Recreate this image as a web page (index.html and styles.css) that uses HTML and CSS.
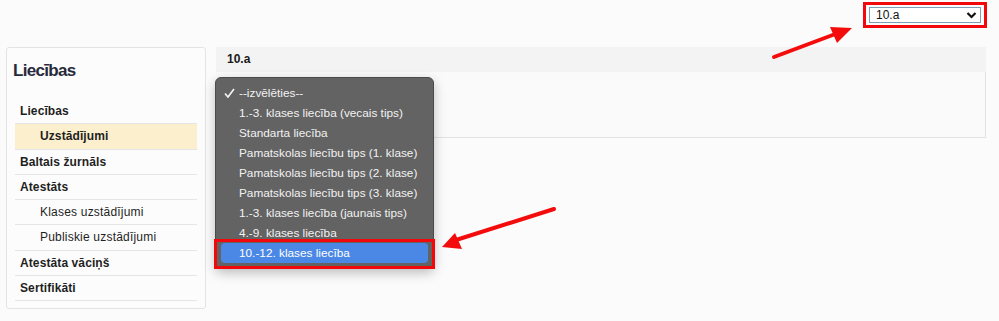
FILE: index.html
```html
<!DOCTYPE html>
<html lang="lv">
  <head>
    <meta charset="UTF-8" />
    <title>Liecības</title>
    <link rel="stylesheet" href="styles.css">
  </head>
  <body>
    <div class="topbar">
      <div class="mark">
        <div class="class-select">
          <span>10.a</span>
          <svg class="chevron" width="11" height="8" viewBox="0 0 11 8">
            <path d="M1.5 2 L5.5 6 L9.5 2" fill="none" stroke="#111" stroke-width="2.2" />
          </svg>
        </div>
      </div>
    </div>

    <div class="content">
      <aside class="sidebar">
        <h2 class="sidebar-title">Liecības</h2>
        <ul class="menu">
          <li class="menu-item">Liecības</li>
          <li class="menu-item sub active">Uzstādījumi</li>
          <li class="menu-item">Baltais žurnāls</li>
          <li class="menu-item">Atestāts</li>
          <li class="menu-item sub plain">Klases uzstādījumi</li>
          <li class="menu-item sub plain">Publiskie uzstādījumi</li>
          <li class="menu-item">Atestāta vāciņš</li>
          <li class="menu-item">Sertifikāti</li>
        </ul>
      </aside>

      <main class="panel">
        <div class="panel-head">10.a</div>
        <div class="panel-body"></div>
      </main>
    </div>

    <!-- open native-looking popup of the type select -->
    <ul class="popup">
      <li>
        <svg class="check" width="11" height="10" viewBox="0 0 11 10">
          <path d="M1 5.5 L4 9 L10 1" fill="none" stroke="#f2f2f2" stroke-width="1.7" />
        </svg>
        --izvēlēties--
      </li>
      <li>1.-3. klases liecība (vecais tips)</li>
      <li>Standarta liecība</li>
      <li>Pamatskolas liecību tips (1. klase)</li>
      <li>Pamatskolas liecību tips (2. klase)</li>
      <li>Pamatskolas liecību tips (3. klase)</li>
      <li>1.-3. klases liecība (jaunais tips)</li>
      <li>4.-9. klases liecība</li>
      <li class="selected">10.-12. klases liecība</li>
    </ul>
    <div class="popup-mark"></div>

    <!-- annotation arrows -->
    <svg class="arrows" width="999" height="321" viewBox="0 0 999 321">
      <line x1="774" y1="57" x2="838" y2="33" stroke="#f40c0c" stroke-width="4" stroke-linecap="round" />
      <polygon points="852,28 830,27 837,43" fill="#f40c0c" />
      <line x1="554" y1="209" x2="456" y2="240" stroke="#f40c0c" stroke-width="4" stroke-linecap="round" />
      <polygon points="442,247 455,233 462,249" fill="#f40c0c" />
    </svg>
  </body>
</html>
```

FILE: styles.css
```css
* {
  margin: 0;
  padding: 0;
  box-sizing: border-box;
}

body {
  font-family: "Liberation Sans", Arial, sans-serif;
  background: #fbfbfb;
  width: 999px;
  height: 321px;
  overflow: hidden;
  position: relative;
  color: #222;
}

.topbar {
  height: 47px;
  display: flex;
  justify-content: flex-end;
  align-items: flex-start;
  padding: 2px 12px 0 0;
}

.mark {
  border: 3px solid #f2080b;
  padding: 2px 3px;
}

.class-select {
  width: 112px;
  height: 16px;
  background: #fff;
  border: 1px solid #7f9db5;
  display: flex;
  align-items: center;
  justify-content: space-between;
  padding: 0 3px 0 6px;
  font-size: 12px;
  color: #111;
}

.content {
  display: flex;
  gap: 10px;
  padding: 0 13px 0 6px;
}

.sidebar {
  width: 200px;
  height: 262px;
  border: 1px solid #e4e4e4;
  border-radius: 3px;
  background: #fcfcfc;
  padding: 11px 8px 0 8px;
}

.sidebar-title {
  font-size: 17px;
  font-weight: 700;
  letter-spacing: -0.7px;
  color: #272a3b;
  line-height: 24px;
  margin: 0 0 16px -2px;
}

.menu {
  list-style: none;
}

.menu-item {
  height: 25.3px;
  line-height: 24px;
  border-bottom: 1px solid #e5e5e5;
  padding-left: 5px;
  font-size: 12px;
  font-weight: 700;
  letter-spacing: 0.1px;
  color: #1f1f1f;
}

.menu-item.sub {
  padding-left: 25px;
}

.menu-item.plain {
  font-weight: 400;
  letter-spacing: 0.2px;
}

.menu-item.active {
  background: #fcefcd;
}

.panel {
  flex: 1;
}

.panel-head {
  height: 25px;
  line-height: 25px;
  background: #f3f3f3;
  padding-left: 11px;
  font-size: 12px;
  font-weight: 700;
  color: #1a1a1a;
}

.panel-body {
  height: 66px;
  background: #fafafa;
  border-right: 1px solid #e2e2e2;
  border-bottom: 1px solid #e2e2e2;
}

.popup {
  position: absolute;
  left: 215px;
  top: 77px;
  width: 219px;
  height: 192px;
  list-style: none;
  background: #636363;
  border: 1px solid #4b4b4b;
  border-radius: 6px;
  box-shadow: 0 4px 12px rgba(0, 0, 0, 0.25);
  padding: 5px 5px;
  font-size: 11.8px;
  color: #f2f2f2;
}

.popup li {
  height: 20px;
  line-height: 20px;
  padding-left: 18px;
  border-radius: 4px;
  position: relative;
}

.check {
  position: absolute;
  left: 3px;
  top: 5px;
}

.popup li.selected {
  background: #4b88e6;
  color: #fff;
}

.popup-mark {
  position: absolute;
  left: 214px;
  top: 239px;
  width: 221px;
  height: 30px;
  border: 3px solid #f2080b;
}

.arrows {
  position: absolute;
  left: 0;
  top: 0;
  pointer-events: none;
}
```
